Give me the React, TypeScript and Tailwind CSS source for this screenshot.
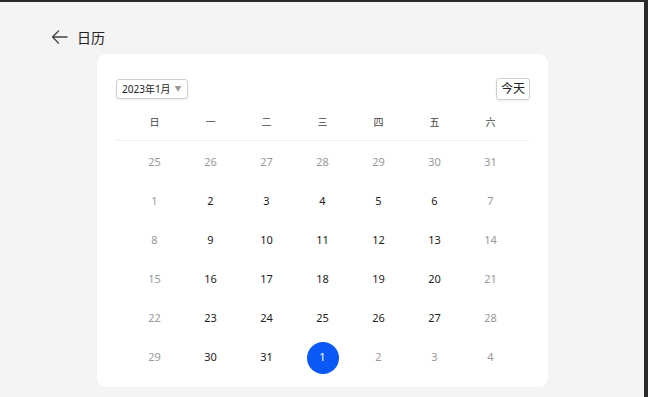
import React from "react";

const weekdays = ["日", "一", "二", "三", "四", "五", "六"];

type Day = { n: number; muted: boolean; selected?: boolean };

const buildDays = (): Day[] => {
    const days: Day[] = [];
    for (let n = 25; n <= 31; n++) days.push({ n, muted: true });
    for (let n = 1; n <= 31; n++) {
        const col = days.length % 7;
        days.push({ n, muted: col === 0 || col === 6 });
    }
    days.push({ n: 1, muted: false, selected: true });
    for (let n = 2; n <= 4; n++) days.push({ n, muted: true });
    return days;
};

const App = () => {
    const days = buildDays();

    return (
        <div
            className="w-[648px] h-[397px] bg-[#f4f4f4] border-t-2 border-r-4 border-[#2b2b2b] overflow-hidden"
            style={{ fontFamily: '"Noto Sans", "Noto Sans CJK SC", sans-serif' }}
        >
            <div className="flex items-center h-[34px] mt-[18px] pl-[51px]">
                <svg width="17" height="14" viewBox="0 0 17 14" fill="none">
                    <path d="M16 7H1.5M7.5 1L1.5 7l6 6" stroke="#444" strokeWidth="1.3" strokeLinecap="round" strokeLinejoin="round" />
                </svg>
                <span className="ml-[9px] text-[14px] text-[#222]">日历</span>
            </div>

            <div className="ml-[97px] w-[451px] h-[333px] rounded-[9px] bg-white pt-[24px]">
                <div className="flex items-center justify-between pl-[19px] pr-[18px]">
                    <div className="flex items-center h-[20px] px-[5px] border border-[#cfcfcf] rounded-[3px] shadow-[0_1px_2px_rgba(0,0,0,0.08)] text-[10px] text-[#222]">
                        <span>2023年1月</span>
                        <span className="ml-[4px] text-[7px] text-[#999]">▼</span>
                    </div>
                    <div className="flex items-center h-[22px] px-[4px] border border-[#cfcfcf] rounded-[3px] shadow-[0_1px_2px_rgba(0,0,0,0.08)] text-[12px] text-[#222]">
                        今天
                    </div>
                </div>

                <div className="mx-[18px] mt-[12px] pb-[8px] border-b border-[#f2f2f2]">
                    <div className="grid grid-cols-7 w-[392px] mx-auto h-[20px]">
                        {weekdays.map((w) => (
                            <div key={w} className="flex items-center justify-center text-[10px] text-[#444]">
                                {w}
                            </div>
                        ))}
                    </div>
                </div>

                <div className="grid grid-cols-7 w-[392px] mx-auto mt-[2px]">
                    {days.map((d, i) => (
                        <div key={i} className="h-[39px] flex items-center justify-center">
                            {d.selected ? (
                                <div className="w-[32px] h-[32px] rounded-full bg-[#0a59f7] flex items-center justify-center text-[11px] text-white">
                                    {d.n}
                                </div>
                            ) : (
                                <span className={`text-[11px] ${d.muted ? "text-[#999999]" : "text-[#222222]"}`}>{d.n}</span>
                            )}
                        </div>
                    ))}
                </div>
            </div>
        </div>
    );
};

export default App;
